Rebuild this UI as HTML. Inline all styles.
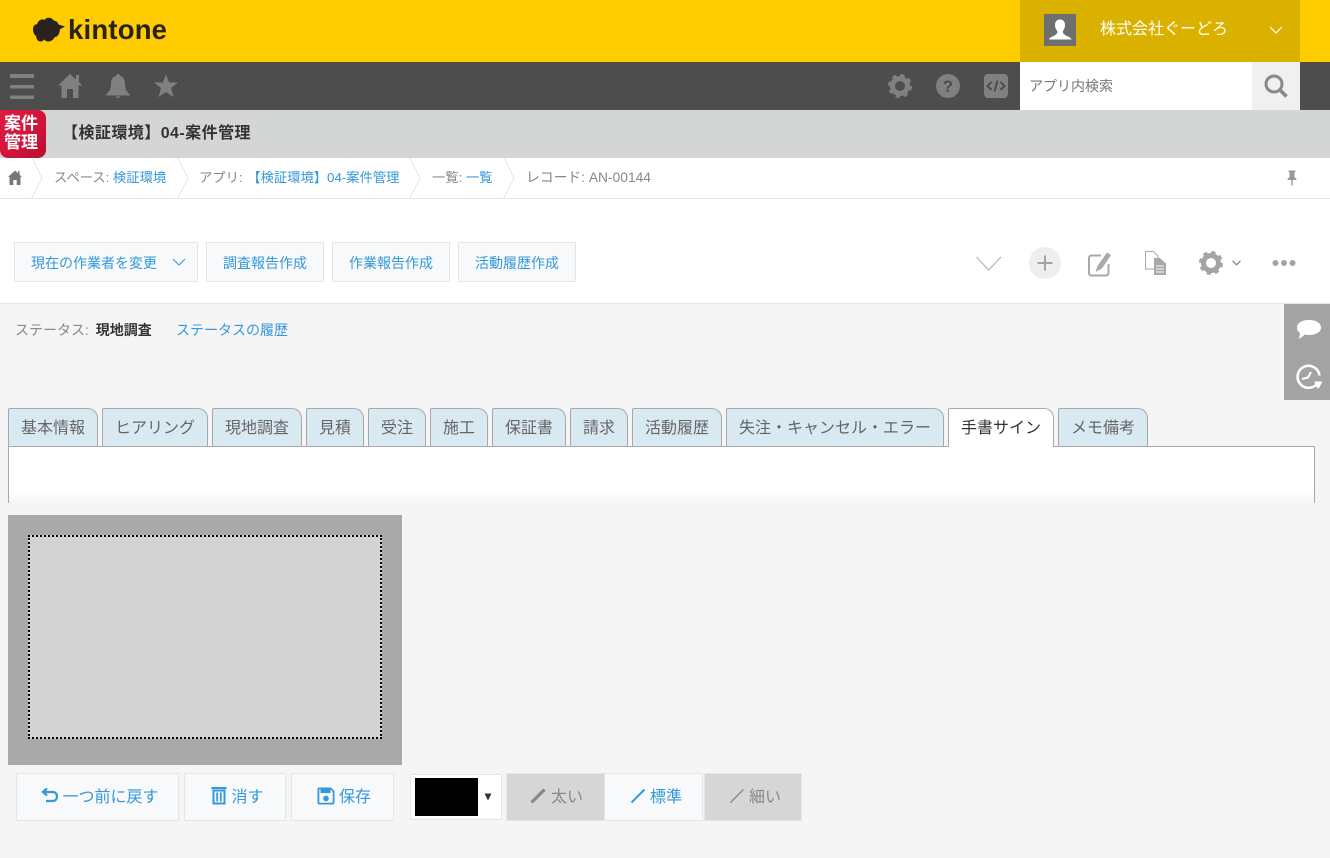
<!DOCTYPE html>
<html lang="ja">
<head>
<meta charset="utf-8">
<title>kintone</title>
<style>
html,body{margin:0;padding:0;width:1330px;height:858px;overflow:hidden;background:#f5f5f5;}
body{position:relative;font-family:"Liberation Sans","Noto Sans CJK JP",sans-serif;font-size:14px;color:#888;}
.a{position:absolute;white-space:nowrap;}
svg{position:absolute;display:block;overflow:visible;}
.link{color:#3498db;}
.btn{position:absolute;box-sizing:border-box;border:1px solid #e3e7e8;background:#f7f9fa;color:#3498db;text-align:center;white-space:nowrap;}
.tb{font-size:14px;line-height:40px;}
.bb{font-size:16px;line-height:48px;}
.tab{position:absolute;top:408px;height:38px;box-sizing:border-box;border:1px solid #a9a9a9;border-bottom:none;border-radius:2px 10px 0 0;background:#d9e9f2;color:#666;font-size:16px;line-height:40px;text-align:center;white-space:nowrap;}
.tab.on{background:#fff;color:#333;height:39px;z-index:3;}
.crumb{position:absolute;top:158px;height:40px;line-height:40px;font-size:13.3px;color:#888;white-space:nowrap;}
</style>
</head>
<body>

<!-- Yellow header -->
<div class="a" style="left:0;top:0;width:1330px;height:62px;background:#ffcc00;"></div>
<svg style="left:32px;top:17px" width="33" height="26" viewBox="0 0 32 22" preserveAspectRatio="none">
  <path fill="#2b2220" d="M1 10C1 7.500 3 6 5 6C6 3 9 1 12 2.500C14 0 19 0 21 3C23 3 25 4.500 26 6.500L32 8L27 10.500C27 14 25 17 22 17C20 21 14 22 12 19C9 22 4 21 4 16C2 15 1 13 1 10Z"/>
</svg>
<div class="a" style="left:68px;top:14px;font-size:27.5px;line-height:32px;font-weight:700;color:#2b2220;letter-spacing:.2px;">kintone</div>

<div class="a" style="left:1020px;top:0;width:280px;height:62px;background:#dbb100;"></div>
<div class="a" style="left:1044px;top:14px;width:32px;height:32px;background:#6f6f6f;"></div>
<svg style="left:1044px;top:14px" width="32" height="32" viewBox="0 0 32 32">
  <path fill="#fff" d="M16 5.500C19.500 5.500 21 8 21 11C21 14 19.500 16 18.800 17.500C18.800 20 21 21 24 22.500C26 23.300 27.300 24.500 27.500 25.500H5C5.200 24.500 6.500 23.300 8.500 22.500C11.500 21 13.500 20 13.500 17.500C12.500 16 11 14 11 11C11 8 12.500 5.500 16 5.500Z"/>
</svg>
<div class="a" style="left:1100px;top:18px;font-size:16px;line-height:24px;color:#fff;">株式会社ぐーどろ</div>
<svg style="left:1269px;top:25px" width="14" height="10" viewBox="0 0 14 10"><path d="M1 2L7 8L13 2" fill="none" stroke="#fff" stroke-width="1.200"/></svg>

<!-- Dark bar -->
<div class="a" style="left:0;top:62px;width:1330px;height:48px;background:#4d4d4d;"></div>
<svg style="left:0;top:62px" width="200" height="48" viewBox="0 0 200 48" fill="#808080">
  <rect x="10" y="12" width="24" height="4"/><rect x="10" y="23" width="24" height="3.500"/><rect x="10" y="33.500" width="24" height="3.500"/>
  <path d="M70 12L76 17.500V13H79V20.200L82 23.500H78.500V36H73V27H67V36H61.500V23.500H58Z"/>
  <path d="M118 12C119.500 12 120 13 120 14C124 15 125 18 125 22C125 27 127 30 130 32.500V33.500H106V32.500C109 30 111 27 111 22C111 18 112 15 116 14C116 13 116.500 12 118 12ZM115.500 34.500H120.500C120 36.500 116 36.500 115.500 34.500Z"/>
  <path d="M166 12.500L169 20.500H178L171 26L173.500 35L166 30L158.500 35L161 26L154 20.500H163Z"/>
</svg>
<svg style="left:888px;top:74px" width="24" height="24" viewBox="0 0 24 24">
  <circle cx="12" cy="12" r="7.500" fill="none" stroke="#808080" stroke-width="5"/>
  <circle cx="12" cy="12" r="10" fill="none" stroke="#808080" stroke-width="4" stroke-dasharray="4 3.850"/>
</svg>
<svg style="left:936px;top:74px" width="24" height="24" viewBox="0 0 24 24">
  <circle cx="12" cy="12" r="12" fill="#808080"/>
  <text x="12" y="18" text-anchor="middle" font-family="Liberation Sans" font-weight="700" font-size="17" fill="#4d4d4d">?</text>
</svg>
<svg style="left:984px;top:74px" width="24" height="24" viewBox="0 0 24 24">
  <rect width="24" height="24" rx="4" fill="#808080"/>
  <path d="M7.500 8L3.500 12L7.500 16M16.500 8L20.500 12L16.500 16M13.500 6.500L10.500 17.500" fill="none" stroke="#4d4d4d" stroke-width="2"/>
</svg>
<div class="a" style="left:1020px;top:62px;width:232px;height:48px;background:#fff;"></div>
<div class="a" style="left:1029px;top:76px;font-size:14px;line-height:20px;color:#777;">アプリ内検索</div>
<div class="a" style="left:1252px;top:62px;width:48px;height:48px;background:#f0f0f0;"></div>
<svg style="left:1264px;top:74px" width="24" height="24" viewBox="0 0 24 24">
  <circle cx="10" cy="10" r="8" fill="none" stroke="#888" stroke-width="3"/>
  <path d="M15.500 15.500L22.500 22.500" stroke="#888" stroke-width="3.500"/>
</svg>

<!-- App title bar -->
<div class="a" style="left:0;top:110px;width:1330px;height:48px;background:#d4d6d6;"></div>
<div class="a" style="left:0;top:110px;width:46px;height:48px;background:linear-gradient(135deg,#e01a3e 0%,#d0143a 60%,#b50f30 100%);border-radius:0 8px 8px 8px;"></div>
<div class="a" style="left:2px;top:114px;width:38px;font-size:17px;line-height:19px;font-weight:700;color:#fff;text-align:center;white-space:normal;">案件<br>管理</div>
<div class="a" style="left:62px;top:122px;font-size:16px;line-height:23px;font-weight:700;color:#333;letter-spacing:.45px;">【検証環境】04-案件管理</div>

<!-- Breadcrumb -->
<div class="a" style="left:0;top:158px;width:1330px;height:41px;background:#fff;border-bottom:1px solid #e3e7e8;box-sizing:border-box;"></div>
<svg style="left:8px;top:170px" width="14" height="16" viewBox="0 0 14 16"><path fill="#777" d="M7 0.500L10 3.200V1H11.500V4.600L14 7H12.500V15H8.700V10H5.300V15H1.500V7H0Z"/></svg>
<svg style="left:0;top:158px" width="530" height="41" viewBox="0 0 530 41" fill="none" stroke="#e3e7e8" stroke-width="1">
  <path d="M32 0L42 20L32 40M178 0L188 20L178 40M410 0L420 20L410 40M504 0L514 20L504 40"/>
</svg>
<div class="crumb" style="left:54px;">スペース: <span class="link">検証環境</span></div>
<div class="crumb" style="left:199px;">アプリ: <span class="link" style="margin-left:1px;">【検証環境】04-案件管理</span></div>
<div class="crumb" style="left:432px;">一覧: <span class="link">一覧</span></div>
<div class="crumb" style="left:526px;font-size:13.8px;">レコード: AN-00144</div>
<svg style="left:1286px;top:170px" width="12" height="16" viewBox="0 0 12 16"><path fill="#999" d="M2.500 0.500H9.500V2H8.500V7L10.500 9V10H6.700V15.500H5.300V10H1.500V9L3.500 7V2H2.500Z"/></svg>

<!-- Toolbar -->
<div class="a" style="left:0;top:199px;width:1330px;height:105px;background:#fff;border-bottom:1px solid #e3e7e8;box-sizing:border-box;"></div>
<div class="btn tb" style="left:14px;top:242px;width:184px;height:40px;text-align:left;padding-left:16px;">現在の作業者を変更</div>
<svg style="left:172px;top:257px" width="14" height="10" viewBox="0 0 14 10"><path d="M1 2L7 8L13 2" fill="none" stroke="#3498db" stroke-width="1"/></svg>
<div class="btn tb" style="left:206px;top:242px;width:118px;height:40px;">調査報告作成</div>
<div class="btn tb" style="left:332px;top:242px;width:118px;height:40px;">作業報告作成</div>
<div class="btn tb" style="left:458px;top:242px;width:118px;height:40px;">活動履歴作成</div>

<svg style="left:976px;top:256px" width="26" height="16" viewBox="0 0 26 16"><path d="M0.500 1L12.500 14L25 1" fill="none" stroke="#b5b5b5" stroke-width="1.200"/></svg>
<div class="a" style="left:1029px;top:247px;width:32px;height:32px;border-radius:50%;background:#eee;"></div>
<svg style="left:1036px;top:254px" width="18" height="18" viewBox="0 0 18 18"><path d="M9 1.500V16.500M1.500 9H16.500" stroke="#a3a3a3" stroke-width="2"/></svg>
<svg style="left:1087px;top:251px" width="26" height="26" viewBox="0 0 26 26">
  <path d="M14 4.500H4.500C3 4.500 2 5.500 2 7V22C2 23.500 3 24.500 4.500 24.500H19C20.500 24.500 21.500 23.500 21.500 22V13" fill="none" stroke="#a9a9a9" stroke-width="2"/>
  <path fill="#a9a9a9" d="M20 1.500L24 4L15 17.500L8.500 21L10.500 15Z"/>
</svg>
<svg style="left:1145px;top:251px" width="22" height="24" viewBox="0 0 22 24">
  <path d="M0.500 0.500H8.500L13 5V18H0.500Z" fill="#fff" stroke="#a9a9a9"/>
  <path fill="#a9a9a9" d="M9 7H15L21 12.500V24H9Z"/>
  <path d="M11 15H19M11 18H19M11 21H19" stroke="#fff" stroke-width="1"/>
</svg>
<svg style="left:1199px;top:251px" width="24" height="24" viewBox="0 0 24 24">
  <circle cx="12" cy="12" r="7.500" fill="none" stroke="#a3a3a3" stroke-width="5"/>
  <circle cx="12" cy="12" r="10" fill="none" stroke="#a3a3a3" stroke-width="4" stroke-dasharray="4 3.850"/>
</svg>
<svg style="left:1232px;top:260px" width="9" height="6" viewBox="0 0 9 6"><path d="M0.500 0.800L4.500 4.800L8.500 0.800" fill="none" stroke="#888" stroke-width="1.300"/></svg>
<svg style="left:1272px;top:259px" width="24" height="8" viewBox="0 0 24 8" fill="#a3a3a3"><circle cx="3.500" cy="4" r="3"/><circle cx="12" cy="4" r="3"/><circle cx="20.500" cy="4" r="3"/></svg>

<!-- Status -->
<div class="a" style="left:15px;top:319px;font-size:14px;line-height:22px;color:#888;">ステータス: <span style="color:#333;font-weight:700;margin-left:3px;">現地調査</span></div>
<div class="a link" style="left:176px;top:319px;font-size:14px;line-height:22px;">ステータスの履歴</div>

<!-- Side panel -->
<div class="a" style="left:1284px;top:304px;width:46px;height:96px;background:#a3a3a3;"></div>
<svg style="left:1296px;top:319px" width="26" height="22" viewBox="0 0 26 22"><path fill="#fff" d="M13 1C20 1 25 4 25 8.500C25 13 20 16 13 16C11.500 16 10 15.800 8.500 15.500C7 17.500 4.500 19.500 2.500 19.500C3.500 18 4 16 4 14C2 12.800 1 10.800 1 8.500C1 4 6 1 13 1Z"/></svg>
<svg style="left:1295px;top:363px" width="28" height="28" viewBox="0 0 28 28">
  <path d="M23 19.500A11 11 0 1 1 24.500 12.500" fill="none" stroke="#fff" stroke-width="2.500"/>
  <path fill="#fff" d="M19 18.500H27.500L24 25L22.500 25.500Z"/>
  <path d="M7 16L13 14.500L16 9" fill="none" stroke="#fff" stroke-width="2"/>
</svg>

<!-- Tabs -->
<div class="a" style="left:8px;top:446px;width:1307px;height:57px;box-sizing:border-box;border:1px solid #a9a9a9;border-bottom:none;border-radius:0 2px 0 0;background:linear-gradient(#fff 0,#fff 44px,#f5f5f5 57px);z-index:2;"></div>
<div class="tab" style="left:8px;width:90px;">基本情報</div>
<div class="tab" style="left:102px;width:106px;">ヒアリング</div>
<div class="tab" style="left:212px;width:90px;">現地調査</div>
<div class="tab" style="left:306px;width:58px;">見積</div>
<div class="tab" style="left:368px;width:58px;">受注</div>
<div class="tab" style="left:430px;width:58px;">施工</div>
<div class="tab" style="left:492px;width:74px;">保証書</div>
<div class="tab" style="left:570px;width:58px;">請求</div>
<div class="tab" style="left:632px;width:90px;">活動履歴</div>
<div class="tab" style="left:726px;width:218px;">失注・キャンセル・エラー</div>
<div class="tab on" style="left:948px;width:106px;">手書サイン</div>
<div class="tab" style="left:1058px;width:90px;">メモ備考</div>

<!-- Signature canvas -->
<div class="a" style="left:8px;top:515px;width:394px;height:250px;background:#a9a9a9;"></div>
<div class="a" style="left:28px;top:535px;width:354px;height:204px;box-sizing:border-box;border:2px dotted #000;background:#d3d3d3;"></div>

<!-- Bottom buttons -->
<div class="btn bb" style="left:16px;top:773px;width:163px;height:48px;padding-left:26px;">一つ前に戻す</div>
<svg style="left:41px;top:787px" width="18" height="18" viewBox="0 0 18 18"><path d="M6 1.500L2 5L6 8.500M2.500 5H11.500C14.500 5 16 7 16 9.500C16 12 14.500 14 11.500 14H5" fill="none" stroke="#3498db" stroke-width="2.300"/></svg>
<div class="btn bb" style="left:184px;top:773px;width:102px;height:48px;padding-left:25px;">消す</div>
<svg style="left:211px;top:786px" width="18" height="19" viewBox="0 0 18 19" fill="#3498db">
  <rect x="0.500" y="1" width="15" height="2.500"/>
  <path d="M1.500 4H14.500V18.500H1.500ZM3.500 5.500V16.500H12.500V5.500Z"/>
  <rect x="5.300" y="6.500" width="1.800" height="9"/><rect x="8.900" y="6.500" width="1.800" height="9"/>
</svg>
<div class="btn bb" style="left:291px;top:773px;width:103px;height:48px;padding-left:25px;">保存</div>
<svg style="left:317px;top:787px" width="18" height="18" viewBox="0 0 18 18" fill="#3498db">
  <path d="M2 0.500H14L17.500 4V16C17.500 17 16.500 17.500 16 17.500H2C1 17.500 0.500 16.500 0.500 16V2C0.500 1 1 0.500 2 0.500ZM2.300 2.300V15.700H15.700V4.800L13.300 2.300Z"/>
  <rect x="3.500" y="2" width="10" height="4"/><circle cx="9" cy="11.500" r="2.800"/>
</svg>

<div class="a" style="left:410px;top:774px;width:92px;height:46px;box-sizing:border-box;border:1px solid #e3e7e8;background:#fff;"></div>
<div class="a" style="left:415px;top:778px;width:63px;height:38px;background:#000;"></div>
<svg style="left:484px;top:793px" width="8" height="8" viewBox="0 0 8 8"><path d="M0.500 0.500H7.500L4 7.500Z" fill="#333"/></svg>

<div class="btn bb" style="left:506px;top:773px;width:99px;height:48px;background:#d6d6d6;color:#888;padding-left:23px;">太い</div>
<svg style="left:530px;top:788px" width="16" height="16" viewBox="0 0 16 16"><path d="M1.500 14.500L14.500 1.500" stroke="#888" stroke-width="3.200"/></svg>
<div class="btn bb" style="left:604px;top:773px;width:99px;height:48px;padding-left:25px;">標準</div>
<svg style="left:630px;top:788px" width="16" height="16" viewBox="0 0 16 16"><path d="M1.500 14.500L14.500 1.500" stroke="#3498db" stroke-width="2"/></svg>
<div class="btn bb" style="left:704px;top:773px;width:98px;height:48px;background:#d6d6d6;color:#888;padding-left:24px;">細い</div>
<svg style="left:729px;top:788px" width="16" height="16" viewBox="0 0 16 16"><path d="M1.500 14.500L14.500 1.500" stroke="#888" stroke-width="1.300"/></svg>

</body>
</html>
